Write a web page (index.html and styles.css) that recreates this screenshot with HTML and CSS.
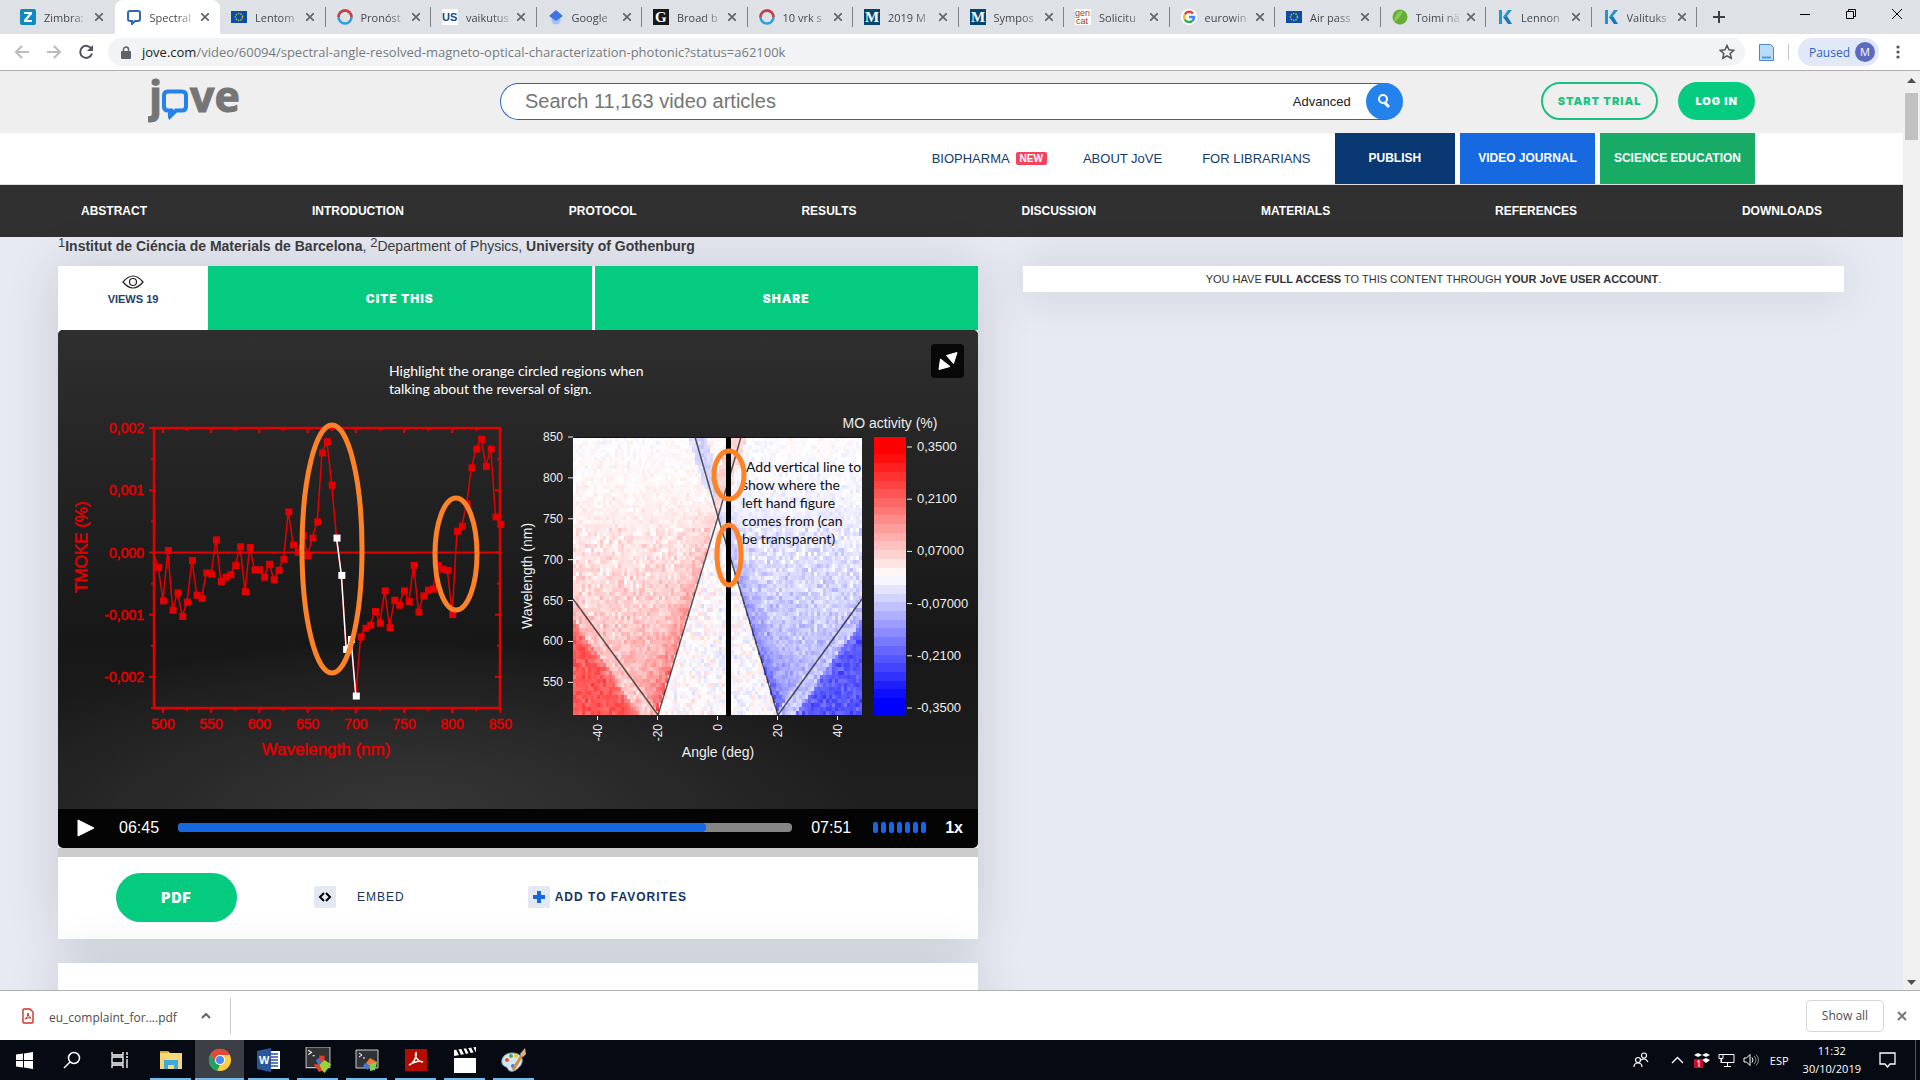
FILE: index.html
```html
<!DOCTYPE html>
<html lang="en">
<head>
    <meta charset="UTF-8">
    <meta name="viewport" content="width=device-width, initial-scale=1.0">
    <title>Spectral and Angle-Resolved Magneto-Optical Characterization</title>
    <link rel="stylesheet" href="styles.css">
</head>
<body>
    <!-- Browser tabs -->
    <div class="tabstrip">
        <div class="tabs" id="tabs"></div>
        <button class="new-tab" aria-label="New tab"><svg width="14" height="14" viewBox="0 0 14 14"><path d="M7 1v12M1 7h12" stroke="#3c4043" stroke-width="2"/></svg></button>
        <div class="window-buttons">
            <button aria-label="Minimize"><svg width="12" height="12" viewBox="0 0 12 12"><path d="M1 6.500h10" stroke="#000"/></svg></button>
            <button aria-label="Restore"><svg width="12" height="12" viewBox="0 0 12 12" fill="none" stroke="#000"><path d="M1.500 3.500h7v7h-7zM3.500 3.500v-2h7v7h-2"/></svg></button>
            <button aria-label="Close"><svg width="12" height="12" viewBox="0 0 12 12"><path d="M1 1l10 10M11 1L1 11" stroke="#000"/></svg></button>
        </div>
    </div>

    <!-- Address bar -->
    <div class="toolbar">
        <button class="tool" aria-label="Back"><svg width="16" height="16" viewBox="0 0 16 16" fill="none" stroke="#babcbe" stroke-width="2"><path d="M15 8H2M8 2L2 8l6 6"/></svg></button>
        <button class="tool" aria-label="Forward"><svg width="16" height="16" viewBox="0 0 16 16" fill="none" stroke="#babcbe" stroke-width="2"><path d="M1 8h13M8 2l6 6-6 6"/></svg></button>
        <button class="tool" aria-label="Reload"><svg width="16" height="16" viewBox="0 0 16 16"><path d="M13.500 5A6 6 0 1 0 14 9.500" fill="none" stroke="#505357" stroke-width="2"/><path d="M15 1v6H9z" fill="#505357"/></svg></button>
        <div class="address">
            <svg width="10" height="13" viewBox="0 0 10 13"><rect x="0" y="5" width="10" height="8" rx="1" fill="#5f6368"/><path d="M2.500 6V3.500a2.500 2.500 0 0 1 5 0V6" fill="none" stroke="#5f6368" stroke-width="1.500"/></svg>
            <span class="url"><b>jove.com</b>/video/60094/spectral-angle-resolved-magneto-optical-characterization-photonic?status=a62100k</span>
            <svg width="16" height="16" viewBox="0 0 16 16"><path d="M8 1.500l2 4.300 4.700.5-3.500 3.200 1 4.700L8 11.800l-4.200 2.400 1-4.700L1.300 6.300 6 5.800z" fill="none" stroke="#505357" stroke-width="1.500"/></svg>
        </div>
        <svg width="15" height="17" viewBox="0 0 15 17"><path d="M.5.500h11l3 3v13H.5z" fill="#b9dcfa" stroke="#4a88c7"/><path d="M3 13.500h9" stroke="#4a9be0" stroke-width="2"/></svg>
        <i class="tool-line"></i>
        <button class="profile">Paused <span>M</span></button>
        <button class="dots" aria-label="Menu"><svg width="4" height="14" viewBox="0 0 4 14" fill="#505357"><circle cx="2" cy="2" r="1.600"/><circle cx="2" cy="7" r="1.600"/><circle cx="2" cy="12" r="1.600"/></svg></button>
    </div>

    <div class="viewport">
        <div class="page">
            <header class="header">
                <a class="logo" href="#" aria-label="JoVE">
                    <svg width="92" height="46" viewBox="0 0 92 46">
                        <text x="1" y="34" class="logo-text">j</text>
                        <path d="M20 13.500h14q4 0 4 4v11q0 4-4 4h-6l-5 5v-5h-3q-4 0-4-4v-11q0-4 4-4z" fill="none" stroke="#2382ec" stroke-width="4"/>
                        <path d="M20 32h9l-9 9z" fill="#2382ec"/>
                        <text x="42" y="34" class="logo-text">ve</text>
                    </svg>
                </a>
                <form class="search">
                    <input type="text" placeholder="Search 11,163 video articles" aria-label="Search video articles">
                    <a href="#">Advanced</a>
                    <button type="button" aria-label="Search"><svg width="14" height="16" viewBox="0 0 14 16" fill="none" stroke="#fff" stroke-width="2"><circle cx="6" cy="6" r="4"/><path d="M8 10l4 4" stroke-width="3"/></svg></button>
                </form>
                <a class="pill outline" href="#">START TRIAL</a>
                <a class="pill" href="#">LOG IN</a>
            </header>

            <nav class="main-nav">
                <a href="#">BIOPHARMA <span class="new">NEW</span></a>
                <a href="#">ABOUT JoVE</a>
                <a href="#">FOR LIBRARIANS</a>
                <a class="block publish" href="#">PUBLISH</a>
                <a class="block journal" href="#">VIDEO JOURNAL</a>
                <a class="block education" href="#">SCIENCE EDUCATION</a>
            </nav>

            <nav class="section-nav">
                <a href="#">ABSTRACT</a>
                <a href="#">INTRODUCTION</a>
                <a href="#">PROTOCOL</a>
                <a href="#">RESULTS</a>
                <a href="#">DISCUSSION</a>
                <a href="#">MATERIALS</a>
                <a href="#">REFERENCES</a>
                <a href="#">DOWNLOADS</a>
            </nav>

            <main class="content">
                <p class="affiliation"><sup>1</sup><b>Institut de Ciéncia de Materials de Barcelona</b>, <sup>2</sup>Department of Physics, <b>University of Gothenburg</b></p>
                <section class="article">
                    <div class="card">
                        <div class="share-row">
                            <div class="views">
                                <svg width="22" height="14" viewBox="0 0 22 14" fill="none" stroke="#222" stroke-width="1.200"><path d="M1 7q10-12 20 0Q11 19 1 7z"/><circle cx="11" cy="7" r="3.500"/></svg>
                                VIEWS 19
                            </div>
                            <button>CITE THIS</button>
                            <button>SHARE</button>
                        </div>

                        <div class="video">
                            <svg class="frame" viewBox="0 0 920 479">
                                <g id="tmoke"></g>
                                <g id="map"></g>
                                <g class="note">
                                    <text x="331" y="46">Highlight the orange circled regions when</text>
                                    <text x="331" y="64">talking about the reversal of sign.</text>
                                </g>
                                <g class="note dark">
                                    <text x="688" y="142">Add vertical line to</text>
                                    <text x="684" y="160">show where the</text>
                                    <text x="684" y="178">left hand figure</text>
                                    <text x="684" y="196">comes from (can</text>
                                    <text x="684" y="214">be transparent)</text>
                                </g>
                                <g fill="none" stroke="#ff8227" stroke-width="5">
                                    <ellipse cx="274" cy="219" rx="30" ry="124"/>
                                    <ellipse cx="398" cy="224" rx="21" ry="56"/>
                                    <ellipse cx="671" cy="145" rx="15" ry="24"/>
                                    <ellipse cx="671" cy="225" rx="12" ry="30"/>
                                </g>
                            </svg>
                            <button class="expand" aria-label="Full screen"><svg width="20" height="20" viewBox="0 0 20 20" fill="#fff" stroke="#fff" stroke-linejoin="round"><path d="M19 1.500L8.500 4.500l7 8zM1 18.500l1.500-10.500 9.500 7.500z"/></svg></button>
                            <div class="controls">
                                <button aria-label="Play"><svg width="18" height="18" viewBox="0 0 18 18"><path d="M1 1l16 8-16 8z" fill="#fff" stroke="#fff" stroke-linejoin="round"/></svg></button>
                                <span class="time">06:45</span>
                                <progress max="471" value="405" aria-label="Playback position"></progress>
                                <span class="time">07:51</span>
                                <div class="volume"><i></i><i></i><i></i><i></i><i></i><i></i><i></i></div>
                                <button class="speed">1x</button>
                            </div>
                        </div>

                        <div class="actions">
                            <a class="pdf" href="#">PDF</a>
                            <button class="embed"><span><svg width="14" height="12" viewBox="0 0 14 12" fill="none" stroke="#000" stroke-width="2"><path d="M6 2L2 6l4 4M8 2l4 4-4 4"/></svg></span>EMBED</button>
                            <button class="favorite"><span><svg width="14" height="14" viewBox="0 0 14 14"><path d="M7 1v12M1 7h12" stroke="#1767df" stroke-width="4"/></svg></span>ADD TO FAVORITES</button>
                        </div>
                    </div>
                    <div class="card next"></div>
                </section>
                <aside>
                    <div class="card access">YOU HAVE <b>FULL ACCESS</b> TO THIS CONTENT THROUGH <b>YOUR JoVE USER ACCOUNT</b>.</div>
                </aside>
            </main>
        </div>
        <div class="scrollbar">
            <svg width="9" height="5" viewBox="0 0 9 5"><path d="M0 5l4.500-5L9 5z" fill="#505050"/></svg>
            <div class="thumb"></div>
            <svg width="9" height="5" viewBox="0 0 9 5"><path d="M0 0l4.500 5L9 0z" fill="#505050"/></svg>
        </div>
    </div>

    <!-- Downloads shelf -->
    <div class="downloads">
        <a href="#" class="file">
            <svg width="12" height="16" viewBox="0 0 12 16" fill="none" stroke="#d4302c"><path d="M2 1h6l3 3v10q0 1-1 1H2q-1 0-1-1V2q0-1 1-1z" stroke-width="1.400"/><path d="M3 11q3-2 3-6 0 4 3 5-3-1-6 1z"/></svg>
            <span>eu_complaint_for....pdf</span>
        </a>
        <button class="more" aria-label="File menu"><svg width="10" height="6" viewBox="0 0 10 6"><path d="M1 5l4-4 4 4" fill="none" stroke="#5f6368" stroke-width="2"/></svg></button>
        <button class="show-all">Show all</button>
        <button class="close" aria-label="Close downloads"><svg width="10" height="10" viewBox="0 0 10 10"><path d="M1 1l8 8M9 1L1 9" stroke="#757779" stroke-width="2"/></svg></button>
    </div>

    <!-- Windows taskbar -->
    <div class="taskbar">
        <button aria-label="Start"><svg width="17" height="17" viewBox="0 0 17 17" fill="#fff"><path d="M0 2.500l7-1V8H0zM8 1.400L17 0v8H8zM0 9h7v6.500l-7-1zM8 9h9v8l-9-1.400z"/></svg></button>
        <button aria-label="Search"><svg width="18" height="18" viewBox="0 0 18 18" fill="none" stroke="#fff" stroke-width="1.500"><circle cx="11" cy="7" r="5.500"/><path d="M7 11l-6 6"/></svg></button>
        <button aria-label="Task view"><svg width="18" height="16" viewBox="0 0 18 16" fill="none" stroke="#fff" stroke-width="1.300"><path d="M1 0v3h11V0M1 16v-3h11v3M1 5h11v6H1zM16 0v3M16 7v9M15 5h2"/></svg></button>
        <button class="app" aria-label="File Explorer"><svg width="24" height="24" viewBox="0 0 24 24"><path d="M1 3h8l2 2h12v16H1z" fill="#f8d775"/><path d="M1 3h8v2H1z" fill="#e0a92b"/><path d="M5 12h14v9h-4v-4H9v4H5z" fill="#3fa9dd"/></svg></button>
        <button class="app active" aria-label="Chrome"><svg width="24" height="24" viewBox="0 0 24 24"><circle cx="12" cy="12" r="11" fill="#ffcd40"/><path d="M2.500 6.500A11 11 0 0 1 22 7H12l-5 8z" fill="#dd4b39"/><path d="M2.500 6.500l5 8.500 4.500 2-3 6A11 11 0 0 1 2.500 6.500z" fill="#1da462"/><circle cx="12" cy="12" r="5" fill="#fff"/><circle cx="12" cy="12" r="4" fill="#4a8af4"/></svg></button>
        <button class="app" aria-label="Word"><svg width="24" height="24" viewBox="0 0 24 24"><path d="M12 3h11v18H12z" fill="#fff"/><path d="M14 6h7M14 9h7M14 12h7M14 15h7M14 18h7" stroke="#2b579a" stroke-width="1.300"/><path d="M0 3l14-3v24L0 21z" fill="#2b579a"/><text x="2" y="16" class="word">W</text></svg></button>
        <button class="app" aria-label="Terminal"><svg width="26" height="26" viewBox="0 0 24 24"><path d="M1 0h22v19H1z" fill="#333" stroke="#bbb"/><path d="M3 3l3 2-3 2M7 8h2" fill="none" stroke="#fff"/><path d="M10 12l5-3 3 5-5 4z" fill="#3c78e0"/><path d="M13 8h5v6h-4z" fill="#e0402f"/><path d="M12 18l6-6 6 4-6 8z" fill="#9ed23c"/><path d="M8 16h5l3 6-3 1z" fill="#e0402f"/></svg></button>
        <button class="app" aria-label="Session"><svg width="24" height="24" viewBox="0 0 24 24"><path d="M1 2h22v18H1z" fill="#303438" stroke="#ccc"/><path d="M4 5l3 2-3 2M8 10h2" fill="none" stroke="#fff"/><path d="M11 15l4-5 7 4-6 7z" fill="#ef7a31"/><path d="M10 15l5 3-2 4-5-4z" fill="#3c78e0"/><path d="M15 16l7-2-2 8-5 1z" fill="#7ed05a"/></svg></button>
        <button class="app" aria-label="Acrobat"><svg width="24" height="24" viewBox="0 0 24 24"><path d="M1 1h22v22H1z" fill="#b30b00"/><path d="M5 17c4-1 8-8 7-12-2 3 2 9 7 9-4-2-9 0-14 3z" fill="none" stroke="#fff" stroke-width="1.500"/></svg></button>
        <button class="app" aria-label="Video editor"><svg width="24" height="26" viewBox="0 0 24 26"><path d="M1 11h22v15H1z" fill="#fff"/><path d="M1 3l22-3v5L1 9z" fill="#fff"/><path d="M4 2l3 6M9 1l3 6M14 1l3 6M19 0l3 6" stroke="#000" stroke-width="2"/></svg></button>
        <button class="app" aria-label="Paint"><svg width="26" height="26" viewBox="0 0 26 26"><path d="M11 6c-7 0-11 5-10 10 1 4 5 3 6 6s6 3 9 0c3-2 6-6 5-10s-5-6-10-6z" fill="#d3e6f1" stroke="#86a9bf"/><circle cx="6" cy="13" r="2" fill="#e3522d"/><circle cx="10" cy="9" r="2" fill="#54a845"/><circle cx="15" cy="9" r="2" fill="#f4c430"/><circle cx="12" cy="19" r="2" fill="#3a7bd5"/><path d="M12 23l9-15" stroke="#d58d3b" stroke-width="3"/><path d="M19 7l5-6 1 6-3 3z" fill="#d9b380"/></svg></button>

        <div class="tray">
            <svg width="16" height="16" viewBox="0 0 16 16" fill="none" stroke="#fff" stroke-width="1.200"><circle cx="5" cy="8" r="2.500"/><path d="M1 15q0-4 4-4t4 4"/><circle cx="11" cy="3.500" r="2.500"/><path d="M8 8q4-3 7 2"/></svg>
            <svg class="chevron" width="13" height="8" viewBox="0 0 13 8"><path d="M1 7l5.500-5.500L12 7" fill="none" stroke="#fff" stroke-width="1.300"/></svg>
            <svg width="16" height="16" viewBox="0 0 16 16"><path d="M4 1l4 2-4 2-4-2zM12 1l4 2-4 2-4-2zM12 6l4 2-4 3-4-3z" fill="#fff"/><rect y="7" width="9" height="9" fill="#c8102e"/><path d="M3 10l2-1.500V15" fill="none" stroke="#fff"/></svg>
            <svg width="17" height="15" viewBox="0 0 17 15" fill="none" stroke="#fff"><path d="M5 1.500h11v8H3.500V5M9.500 10v4M6 13.500h7M1 1.500h4v4H1zM3 5v5"/></svg>
            <svg width="17" height="14" viewBox="0 0 17 14" fill="none" stroke="#fff"><path d="M1 5h2.500L7 1.500v11L3.500 9H1z"/><path d="M9 4.500q2 2.500 0 5"/><path d="M11 3q4 4 0 8M13 1.500q5 5.500 0 11" stroke="#888"/></svg>
            <span class="lang">ESP</span>
            <div class="clock">11:32<br>30/10/2019</div>
            <svg class="notify" width="17" height="16" viewBox="0 0 17 16"><path d="M1 1h15v11h-5l-2.500 3L6 12H1z" fill="none" stroke="#fff" stroke-width="1.300"/></svg>
        </div>
    </div>

    <script src="script.js"></script>
</body>
</html>
```
FILE: styles.css
```css
* {
    box-sizing: border-box;
}
body {
    margin: 0;
    height: 100vh;
    display: flex;
    flex-direction: column;
    overflow: hidden;
    font-family: "Liberation Sans", Arial, sans-serif;
}
a {
    color: inherit;
    text-decoration: none;
}
button {
    font: inherit;
    color: inherit;
    border: 0;
    padding: 0;
    background: none;
    display: flex;
    align-items: center;
    justify-content: center;
}
svg {
    flex: none;
}

/* browser */
.tabstrip, .toolbar, .downloads, .taskbar {
    font-family: "Open Sans", "Noto Sans", sans-serif;
    flex: none;
    display: flex;
    align-items: center;
}
.tabstrip {
    height: 34px;
    background: #dee1e6;
    padding-left: 9px;
    font-size: 11px;
    color: #45494d;
}
.tabs {
    flex: 1;
    display: flex;
    height: 34px;
}
.tab {
    flex: 1 1 0;
    min-width: 0;
    display: flex;
    align-items: center;
    padding-left: 11px;
    position: relative;
}
.tab::after {
    content: "";
    position: absolute;
    right: 0;
    top: 7px;
    height: 20px;
    border-right: 1px solid #808387;
}
.tab.plain::after {
    display: none;
}
.tab.active {
    background: #fff;
    border-radius: 8px 8px 0 0;
}
.tab-title {
    margin-left: 8px;
    width: 48px;
    white-space: nowrap;
    -webkit-mask-image: linear-gradient(to right, #000 55%, transparent);
    mask-image: linear-gradient(to right, #000 55%, transparent);
}
.tab button {
    margin-left: 3px;
}
.fav-text {
    font-family: "Liberation Serif", serif;
    font-size: 15px;
    font-weight: bold;
}
.fav-sans {
    font-family: "Liberation Sans", sans-serif;
    font-size: 11px;
    font-weight: bold;
}
.fav-small {
    font-family: "Liberation Sans", sans-serif;
    font-size: 9px;
}
.new-tab {
    width: 44px;
}
.window-buttons {
    display: flex;
    width: 179px;
    padding-left: 41px;
    margin-top: -6px;
}
.window-buttons button {
    width: 46px;
    height: 28px;
}
.toolbar {
    height: 37px;
    background: #fff;
    border-bottom: 1px solid #b3adb1;
    padding: 0 20px 0 6px;
}
.tool {
    width: 32px;
    height: 32px;
}
.address {
    flex: 1;
    display: flex;
    align-items: center;
    height: 28px;
    margin: 0 14px 0 6px;
    padding: 0 10px 0 13px;
    border-radius: 14px;
    background: #f1f3f4;
}
.url {
    flex: 1;
    margin-left: 11px;
    font-size: 13px;
    color: #777b7f;
}
.url b {
    font-weight: normal;
    color: #202124;
}
.tool-line {
    width: 1px;
    height: 16px;
    margin: 0 9px 0 14px;
    background: #c5c7ca;
}
.profile {
    height: 28px;
    padding: 0 4px 0 11px;
    gap: 5px;
    border-radius: 14px;
    background: #e1e9f9;
    color: #2c5fc5;
    font-size: 12px;
}
.profile span {
    width: 20px;
    line-height: 20px;
    border-radius: 10px;
    background: #5c6bc0;
    color: #fff;
    font-size: 11px;
}
.dots {
    margin-left: 17px;
}

/* page */
.viewport {
    flex: 1;
    min-height: 0;
    display: flex;
}
.page {
    flex: 1;
    overflow: hidden;
    background: #e7eaf3;
}
.header {
    height: 62px;
    padding: 0 148px 2px;
    display: flex;
    align-items: center;
    background: #efefef;
}
.logo {
    height: 46px;
    margin-right: 260px;
}
.logo-text {
    font: bold 43px "Open Sans", sans-serif;
    fill: #757575;
    stroke: #757575;
}
.search {
    flex: 1;
    display: flex;
    align-items: center;
    height: 37px;
    margin-right: 138px;
    border: 1px solid #2468bd;
    border-right: 0;
    border-radius: 19px;
    background: #fff;
}
.search input {
    flex: 1;
    border: 0;
    padding: 0 24px;
    background: none;
    font: 20px "Liberation Sans", Arial, sans-serif;
}
.search input::placeholder {
    color: #757575;
}
.search a {
    font-size: 13px;
    color: #222;
    margin-right: 15px;
}
.search button {
    width: 37px;
    height: 37px;
    border-radius: 50%;
    background: #2382ec;
}
.pill {
    height: 38px;
    padding: 0 17px;
    line-height: 38px;
    border-radius: 19px;
    background: #05cb80;
    color: #fff;
    font-family: Inter, sans-serif;
    font-size: 11px;
    font-weight: 900;
    letter-spacing: 1px;
}
.pill.outline {
    padding: 0 15px;
    line-height: 34px;
    margin-right: 20px;
    border: 2px solid #1ebd80;
    background: none;
    color: #1bc381;
}
.main-nav {
    height: 52px;
    padding: 0 148px;
    display: flex;
    align-items: center;
    justify-content: flex-end;
    background: #fff;
    border-bottom: 1px solid #ddd;
    color: #153a6c;
    font-size: 13px;
}
.main-nav a {
    margin-right: 40px;
}
.main-nav a:nth-child(1) {
    margin-right: 36px;
}
.main-nav a:nth-child(3) {
    margin-right: 24px;
}
.main-nav .new {
    margin-left: 3px;
    padding: 1px 4px;
    border-radius: 2px;
    background: #f7425f;
    color: #fff;
    font-size: 10px;
    font-weight: bold;
    vertical-align: 1px;
}
.main-nav .block {
    height: 51px;
    margin-right: 5px;
    padding: 0 18px;
    line-height: 51px;
    color: #fff;
    font-size: 12px;
    font-weight: bold;
}
.main-nav .publish {
    padding: 0 34px;
    background: #0a3872;
}
.main-nav .journal {
    background: #1769e0;
}
.main-nav .education {
    margin-right: 0;
    padding: 0 14px;
    background: #17ab66;
}
.section-nav {
    height: 52px;
    padding: 0 81px;
    display: flex;
    align-items: center;
    justify-content: space-between;
    background: #303030;
    color: #fff;
    font-size: 12px;
    font-weight: bold;
}
.content {
    display: grid;
    grid-template-columns: 920fr 821fr;
    column-gap: 45px;
    padding: 0 59px 0 58px;
}
.affiliation {
    grid-column: 1 / 3;
    height: 29px;
    margin: 0;
    line-height: 18px;
    font-size: 14px;
    color: #3c3d42;
}
.affiliation sup {
    font-size: 13px;
    line-height: 0;
    vertical-align: 4px;
}
.card {
    background: #fff;
    box-shadow: 0 0 50px rgba(0, 0, 0, 0.14);
}
.share-row {
    display: grid;
    grid-template-columns: 147px 1fr 1fr;
    column-gap: 3px;
    height: 64px;
}
.share-row button {
    background: #05cb80;
    color: #fff;
    font-family: Inter, sans-serif;
    font-size: 12px;
    font-weight: 900;
    letter-spacing: 1px;
}
.views {
    display: flex;
    flex-direction: column;
    align-items: center;
    gap: 4px;
    padding: 9px 0 0 3px;
    font-size: 11px;
    font-weight: bold;
    color: #1c3f6e;
}
.video {
    position: relative;
    border-radius: 5px;
    overflow: hidden;
    background: #040404;
}
.frame {
    display: block;
    width: 100%;
    background: radial-gradient(ellipse 50% 36% at 38% 100%, #363637, transparent), linear-gradient(#2f2f30, #292929 15%, #171717 65%, #1f1f20);
}
.frame text {
    font-family: "Liberation Sans", Arial, sans-serif;
}
.frame .note text {
    font-family: Lato, sans-serif;
    font-size: 14px;
    fill: #fff;
}
.frame .dark text {
    fill: #111;
}
#tmoke text {
    fill: #e40000;
    font-size: 14px;
    stroke: #e40000;
    stroke-width: 0.5px;
}
#tmoke .title {
    font-size: 17px;
}
#map text {
    fill: #eee;
    font-size: 12px;
}
#map .scale {
    font-size: 13px;
}
#map .title {
    font-size: 14px;
}
.expand {
    position: absolute;
    top: 14px;
    right: 14px;
    width: 33px;
    height: 34px;
    border-radius: 4px;
    background: #080808;
}
.controls {
    display: flex;
    align-items: center;
    height: 39px;
    padding: 0 15px 2px 19px;
    color: #fff;
    font-size: 16px;
}
.time {
    margin: 0 19px 0 24px;
}
.controls progress + .time {
    margin-left: 19px;
    margin-right: 22px;
}
progress {
    flex: 1;
    min-width: 0;
    height: 9px;
    appearance: none;
    -webkit-appearance: none;
}
progress::-webkit-progress-bar {
    border-radius: 4px;
    background: #858585;
}
progress::-webkit-progress-value {
    border-radius: 4px;
    background: #1667e1;
}
.volume {
    display: flex;
    gap: 3px;
    margin-right: 19px;
}
.volume i {
    width: 5px;
    height: 11px;
    border-radius: 2px;
    background: #1667e1;
}
.speed {
    font-weight: bold;
}
.actions {
    display: flex;
    align-items: center;
    height: 91px;
    padding: 0 0 2px 58px;
    border-top: 9px solid #ccc;
    color: #14345f;
    font-size: 12px;
    letter-spacing: 1px;
}
.pdf {
    width: 121px;
    line-height: 49px;
    border-radius: 25px;
    background: #05cb80;
    color: #fff;
    text-align: center;
    font-family: Inter, sans-serif;
    font-size: 14px;
    font-weight: 900;
}
.actions span {
    display: flex;
    align-items: center;
    justify-content: center;
    width: 22px;
    height: 22px;
    margin-right: 5px;
    border-radius: 2px;
    background: #e3e8f3;
}
.actions button {
    letter-spacing: 1px;
}
.embed {
    margin: 0 123px 0 77px;
}
.actions .embed span {
    margin-right: 21px;
}
.favorite {
    font-weight: bold;
}
.next {
    height: 200px;
    margin-top: 24px;
}
.access {
    padding: 5px 0;
    line-height: 16px;
    text-align: center;
    font-size: 11px;
    color: #333;
}
.scrollbar {
    width: 17px;
    display: flex;
    flex-direction: column;
    align-items: center;
    padding: 7px 0 5px;
    background: #f0f0f0;
}
.thumb {
    width: 13px;
    height: 47px;
    margin: 10px 0 auto;
    background: #c1c1c1;
}

/* downloads shelf */
.downloads {
    height: 50px;
    border-top: 1px solid #b1b1b1;
    background: #fff;
    padding: 0 13px 0 22px;
    font-size: 12px;
    color: #4a4d51;
}
.file {
    display: flex;
    align-items: center;
    gap: 15px;
}
.file span {
    padding-top: 4px;
}
.more {
    width: 54px;
    height: 36px;
    padding-left: 6px;
    border-right: 1px solid #ccc;
}
.show-all {
    margin-left: auto;
    width: 78px;
    height: 32px;
    border: 1px solid #d5d7da;
    border-radius: 4px;
}
.close {
    margin-left: 13px;
}

/* taskbar */
.taskbar {
    height: 40px;
    background: #060b13;
    color: #fff;
    font-size: 11px;
}
.taskbar button {
    width: 48px;
    height: 40px;
}
.taskbar .app {
    width: 49px;
    position: relative;
}
.taskbar button:nth-child(4) {
    margin-left: 2px;
}
.app::after {
    content: "";
    position: absolute;
    left: 4px;
    right: 4px;
    bottom: 0;
    height: 2px;
    background: #76b9ed;
}
.app.active {
    background: #3c3f45;
}
.app.active::after {
    left: 0;
    right: 0;
}
.word {
    font: bold 11px "Liberation Sans", sans-serif;
    fill: #fff;
}
.tray {
    margin-left: auto;
    display: flex;
    align-items: center;
    gap: 8px;
    height: 40px;
    margin-right: 4px;
    padding-right: 19px;
    border-right: 1px solid #555;
}
.chevron {
    margin: 0 2px 0 14px;
}
.lang {
    margin: 0 6px 0 2px;
}
.clock {
    line-height: 18px;
    text-align: center;
}
.notify {
    margin-left: 10px;
}
```
FILE: script.js
```js
// Browser tabs
const eu = '<rect y="2" width="16" height="12" fill="#0b4da2"/><circle cx="8" cy="8" r="3.500" fill="none" stroke="#b5b04c" stroke-width="1.500" stroke-dasharray="1.500 1"/>';
const ring = '<circle cx="8" cy="8" r="6.500" fill="none" stroke="#27a0dc" stroke-width="2.500"/><path d="M1.500 8a6.500 6.500 0 0 1 13 0" fill="none" stroke="#d03c40" stroke-width="2.500"/>';
const mark = '<rect width="16" height="16" fill="#07466b"/><text x="1" y="13" class="fav-text" fill="#fff">M</text>';
const kela = '<path d="M2 1h3v14H2zM6 8l5-7h4l-5 6z" fill="#2196c9"/><path d="M6 8l4-1 5 8h-4z" fill="#1579b8"/>';
const tabs = [
    ['Zimbra:', '<rect width="16" height="16" rx="2" fill="#0f8bc0"/><path d="M4 3h8v2l-5 6h5v2H4v-2l5-6H4z" fill="#fff"/>'],
    ['Spectral', '<path d="M4 2h8q2 0 2 2v6q0 2-2 2H9l-3 3v-3H4q-2 0-2-2V4q0-2 2-2z" fill="none" stroke="#3168b0" stroke-width="2"/>'],
    ['Lentom', eu],
    ['Pronóst', ring],
    ['vaikutus', '<rect width="16" height="16" fill="#fff"/><text x="0" y="12" class="fav-sans" fill="#12498c">US</text>'],
    ['Google', '<circle cx="8" cy="11" r="4.500" fill="#a0c3ff"/><path d="M8 1l7 6-7 5-7-5z" fill="#3f76dd"/>'],
    ['Broad b', '<rect width="16" height="16" fill="#17181c"/><text x="2" y="13" class="fav-text" fill="#fff">G</text>'],
    ['10 vrk s', ring],
    ['2019 M', mark],
    ['Sympos', mark],
    ['Solicitu', '<rect width="16" height="16" fill="#fff"/><text x="0" y="7" class="fav-small" fill="#a63220">gen</text><text x="1" y="15" class="fav-small" fill="#a63220">cat</text>'],
    ['eurowin', '<circle cx="8" cy="8" r="8" fill="#fff"/><g fill="none" stroke-width="2.500"><path d="M12 4.500A5 5 0 0 0 3.800 5.500" stroke="#ea4335"/><path d="M3.800 5.500a5 5 0 0 0 0 5" stroke="#fbbc05"/><path d="M3.800 10.500a5 5 0 0 0 7.500 1.500" stroke="#34a853"/><path d="M11.300 12A5 5 0 0 0 13 8H8" stroke="#4285f4"/></g>'],
    ['Air pass', eu],
    ['Toimi nä', '<circle cx="8" cy="8" r="7.500" fill="#66ae35"/><path d="M2 13Q3 3 11 1 9 9 2 13z" fill="#8bca56"/>'],
    ['Lennon', kela],
    ['Valituks', kela]
];
document.getElementById('tabs').innerHTML = tabs.map(([title, icon], i) => `
    <div class="tab${i === 1 ? ' active' : ''}${i < 2 ? ' plain' : ''}">
        <svg width="16" height="16" viewBox="0 0 16 16">${icon}</svg>
        <span class="tab-title">${title}</span>
        <button aria-label="Close tab"><svg width="8" height="8" viewBox="0 0 8 8"><path d="M0 0l8 8M8 0L0 8" stroke="#5f6368" stroke-width="1.600"/></svg></button>
    </div>`).join('');

const red = '#e40000';
const line = (x1, y1, x2, y2, color, width) =>
    `<line x1="${x1}" y1="${y1}" x2="${x2}" y2="${y2}" stroke="${color}" stroke-width="${width}"/>`;

// TMOKE against wavelength, 490 to 850 nm every 5 nm, in units of 0.00001
const tmoke = [
    0, -23, -77, 4, -92, -64, -102, -79, -12, -68, -73, -32, -34, 21, -46, -39, -35, -20, 10, -62,
    9, -27, -27, -39, -18, -43, -28, -10, 66, 13, 1, 28, -4, 24, 50, 161, 179, 109, 24, -36, -155,
    -139, -230, -135, -121, -116, -94, -113, -61, -120, -76, -84, -61, -78, -20, -95, -69, -60,
    -58, -20, -26, -28, -99, 35, 43, 79, 137, 167, 183, 139, 167, 58, 46
];

function drawTmoke() {
    const X = nm => 105 + (nm - 500) * 0.964;
    const Y = v => 222.5 - v * 0.622;
    let out = `<rect x="96" y="98" width="346" height="280" fill="none" stroke="${red}" stroke-width="2.500"/>`;
    out += line(96, Y(0), 442, Y(0), red, 2);
    for (let nm = 500; nm <= 850; nm += 25) {
        const long = nm % 50 === 0;
        out += line(X(nm), 378, X(nm), long ? 383 : 381, red, 2);
        out += line(X(nm), 98, X(nm), long ? 103 : 101, red, 2);
        if (long) out += `<text x="${X(nm)}" y="399" text-anchor="middle">${nm}</text>`;
    }
    for (let v = -250; v <= 200; v += 50) {
        const long = v % 100 === 0;
        out += line(long ? 91 : 93, Y(v), 96, Y(v), red, 2);
        out += line(long ? 437 : 439, Y(v), 442, Y(v), red, 2);
        if (long) out += `<text x="86" y="${Y(v) + 5}" text-anchor="end">${(v / 100000).toFixed(3).replace('.', ',')}</text>`;
    }
    const pts = tmoke.map((v, i) => [X(490 + i * 5), Y(v)]);
    const isWhite = i => i >= 38 && i <= 42;
    out += `<polyline points="${pts.join(' ')}" fill="none" stroke="${red}" stroke-width="1.500"/>`;
    out += `<polyline points="${pts.slice(38, 43).join(' ')}" fill="none" stroke="#fff" stroke-width="1.500"/>`;
    pts.forEach(([x, y], i) => {
        if (i > 0) out += `<rect x="${x - 3}" y="${y - 3}" width="7" height="7" fill="${isWhite(i) ? '#fff' : red}"/>`;
    });
    out += '<text class="title" x="268" y="425" text-anchor="middle">Wavelength (nm)</text>';
    out += '<text class="title" transform="translate(29 217) rotate(-90)" text-anchor="middle">TMOKE (%)</text>';
    document.getElementById('tmoke').innerHTML = out;
}

// Magneto-optical activity, angle against wavelength
let seed = 7;
function random() {
    seed = (seed * 16807) % 2147483647;
    return seed / 2147483647;
}

function activity(angle, nm) {
    const t = (nm - 510) / 340;
    const a = -Math.abs(angle);
    const edge = -20 + 27.5 * t;
    // how far a cell lies inside the dark lower corner
    const corner = -48 + (625 - nm) * 0.19 - a;
    let v = 0.004;
    if (a < edge) {
        v = 0.12 * Math.pow(1 - t, 1.3);
        if (nm < 760) v += 0.13 * (1 - t) * Math.exp((a - edge) / 4);
        if (corner > 0) v = Math.min(0.23, 0.16 + corner * 0.02);
        else if (a < -48 + (652 - nm) * 0.2) v = 0.08;
    }
    if (nm > 757 && a > -edge - 0.5 && a < 0) v = 0.01;
    if (nm > 757 && a > -edge && a < -edge + 4) v = -0.06;
    if (nm > 790 && a < -edge && a > -edge - 2) v = -0.05;
    return angle < 0 ? v : -v;
}

function heatColor(v) {
    const k = Math.round(255 * (1 - Math.min(1, Math.abs(v) / 0.35)));
    return v > 0 ? `rgb(255,${k},${k})` : `rgb(${k},${k},255)`;
}

function drawMap() {
    const X = deg => 659.5 + deg * 3;
    const Y = nm => 107 + (850 - nm) * 0.8178;
    let out = '<g shape-rendering="crispEdges">';
    for (let r = 0; r < 70; r++) {
        for (let c = 0; c < 97; c++) {
            const nm = 850 - r * 4.9;
            const noise = (random() + random() - 1) * (nm < 740 ? 0.055 : 0.025);
            out += `<rect x="${515 + c * 289 / 97}" y="${107 + r * 278 / 70}" width="3" height="4" fill="${heatColor(activity(c - 48, nm) + noise)}"/>`;
        }
    }
    for (let i = 0; i < 32; i++) {
        const v = Math.max(-0.35, Math.min(0.35, 0.38 - i * 0.0245));
        out += `<rect x="816" y="${107 + i * 8.7}" width="32" height="9" fill="${heatColor(v)}"/>`;
    }
    out += '</g>';
    out += line(515, 107.5, 804, 107.5, '#111', 1);
    out += `<g fill="none" stroke="#222" stroke-opacity=".75" stroke-width="1.500">
        <polyline points="637,107 660,187 720,385 804,269"/>
        <polyline points="683,107 660,187 600,385 515,269"/>
    </g>`;
    out += '<rect x="668" y="107" width="5" height="279" fill="#000"/>';
    for (let nm = 550; nm <= 850; nm += 50) {
        out += line(510, Y(nm), 515, Y(nm), '#eee', 1);
        out += `<text x="505" y="${Y(nm) + 4}" text-anchor="end">${nm}</text>`;
    }
    for (let deg = -40; deg <= 40; deg += 20) {
        out += line(X(deg), 386, X(deg), 390, '#eee', 1);
        out += `<text transform="translate(${X(deg) + 4} 394) rotate(-90)" text-anchor="end">${deg}</text>`;
    }
    ['0,3500', '0,2100', '0,07000', '-0,07000', '-0,2100', '-0,3500'].forEach((label, i) => {
        const y = 117 + i * 52.2;
        out += line(849, y, 854, y, '#eee', 1);
        out += `<text class="scale" x="859" y="${y + 4}">${label}</text>`;
    });
    out += '<text class="title" x="832" y="98" text-anchor="middle">MO activity (%)</text>';
    out += '<text class="title" x="660" y="427" text-anchor="middle">Angle (deg)</text>';
    out += '<text class="title" transform="translate(474 246) rotate(-90)" text-anchor="middle">Wavelength (nm)</text>';
    document.getElementById('map').innerHTML = out;
}

drawTmoke();
drawMap();
```
